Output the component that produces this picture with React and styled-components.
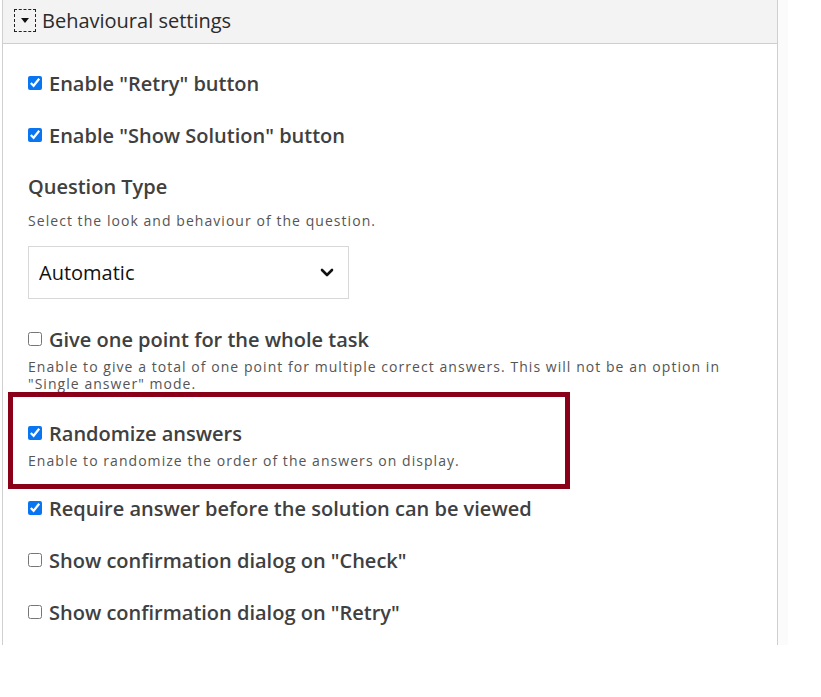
import React from "react";
import styled, { createGlobalStyle } from "styled-components";

const GlobalStyle = createGlobalStyle`
  html, body {
    margin: 0;
    padding: 0;
    background: #fff;
    font-family: "Open Sans", "Noto Sans", sans-serif;
  }
`;

const Page = styled.div`
  display: flex;
  align-items: flex-start;
  padding-left: 2px;
`;

const Panel = styled.section`
  width: 774px;
  border-left: 1px solid #cfcfcf;
  border-right: 1px solid #cfcfcf;
`;

const Gutter = styled.div`
  width: 10px;
  height: 645px;
  background: #fbfbfb;
`;

const Header = styled.header`
  display: flex;
  align-items: center;
  height: 44px;
  padding: 0 0 2px 11px;
  background: #f3f3f3;
  border-bottom: 1px solid #cfcfcf;
  box-sizing: border-box;
`;

const Toggle = styled.span`
  display: flex;
  align-items: center;
  justify-content: center;
  width: 22px;
  height: 23px;
  margin-right: 6px;
  border: 1px dashed #222;
  box-sizing: border-box;

  &::after {
    content: "";
    border-left: 4px solid transparent;
    border-right: 4px solid transparent;
    border-top: 5px solid #111;
  }
`;

const Title = styled.h2`
  margin: 0;
  font-size: 20px;
  font-weight: 400;
  color: #2b2b2b;
`;

const Body = styled.div`
  display: flex;
  flex-direction: column;
  padding: 26px 0 20px 25px;
`;

const Field = styled.div`
  display: flex;
  flex-direction: column;
  margin-top: ${(p) => p.$gap ?? 26}px;
`;

const CheckLabel = styled.label`
  display: flex;
  align-items: center;
  height: 26px;
  font-size: 20px;
  font-weight: 600;
  color: #404040;
`;

const Check = styled.input`
  width: 14px;
  height: 14px;
  margin: 0 7px 0 0;
  accent-color: #0a75f0;
`;

const Heading = styled.div`
  height: 26px;
  line-height: 26px;
  font-size: 20px;
  font-weight: 600;
  color: #404040;
`;

const Description = styled.div`
  margin-top: ${(p) => p.$gap ?? 6}px;
  font-size: 14px;
  line-height: ${(p) => p.$lh ?? 18}px;
  color: #555;
  letter-spacing: 1.05px;
  padding-right: 40px;
`;

const SelectBox = styled.div`
  display: flex;
  align-items: center;
  justify-content: space-between;
  width: 321px;
  height: 53px;
  margin-top: 16px;
  padding: 0 14px 0 10px;
  box-sizing: border-box;
  border: 1px solid #d8d8d8;
  background: #fff;
  font-size: 20px;
  color: #111;
`;

const Highlight = styled.div`
  display: flex;
  flex-direction: column;
  width: 562px;
  margin-left: -20px;
  padding: 23px 0 14px 15px;
  box-sizing: border-box;
  border: 5px solid #8a0018;
`;

const Chevron = () => (
  <svg width="14" height="9" viewBox="0 0 14 9">
    <path d="M2 2 L7 7 L12 2" fill="none" stroke="#111" strokeWidth="2.6" strokeLinecap="round" strokeLinejoin="round" />
  </svg>
);

const CheckField = ({ label, checked, gap }) => (
  <Field $gap={gap}>
    <CheckLabel>
      <Check type="checkbox" checked={checked} readOnly />
      {label}
    </CheckLabel>
  </Field>
);

export default function App() {
  return (
    <>
      <GlobalStyle />
      <Page>
        <Panel>
          <Header>
            <Toggle />
            <Title>Behavioural settings</Title>
          </Header>
          <Body>
            <CheckField label={'Enable "Retry" button'} checked gap={0} />
            <CheckField label={'Enable "Show Solution" button'} checked />
            <Field>
              <Heading>Question Type</Heading>
              <Description $gap={12}>Select the look and behaviour of the question.</Description>
              <SelectBox>
                Automatic
                <Chevron />
              </SelectBox>
            </Field>
            <Field $gap={27}>
              <CheckLabel>
                <Check type="checkbox" readOnly />
                Give one point for the whole task
              </CheckLabel>
              <Description $lh={17}>
                Enable to give a total of one point for multiple correct answers. This will not be an option in "Single answer" mode.
              </Description>
            </Field>
            <Field $gap={0}>
              <Highlight>
                <CheckLabel>
                  <Check type="checkbox" checked readOnly />
                  Randomize answers
                </CheckLabel>
                <Description>Enable to randomize the order of the answers on display.</Description>
              </Highlight>
            </Field>
            <CheckField label="Require answer before the solution can be viewed" checked gap={6} />
            <CheckField label={'Show confirmation dialog on "Check"'} />
            <CheckField label={'Show confirmation dialog on "Retry"'} />
          </Body>
        </Panel>
        <Gutter />
      </Page>
    </>
  );
}
